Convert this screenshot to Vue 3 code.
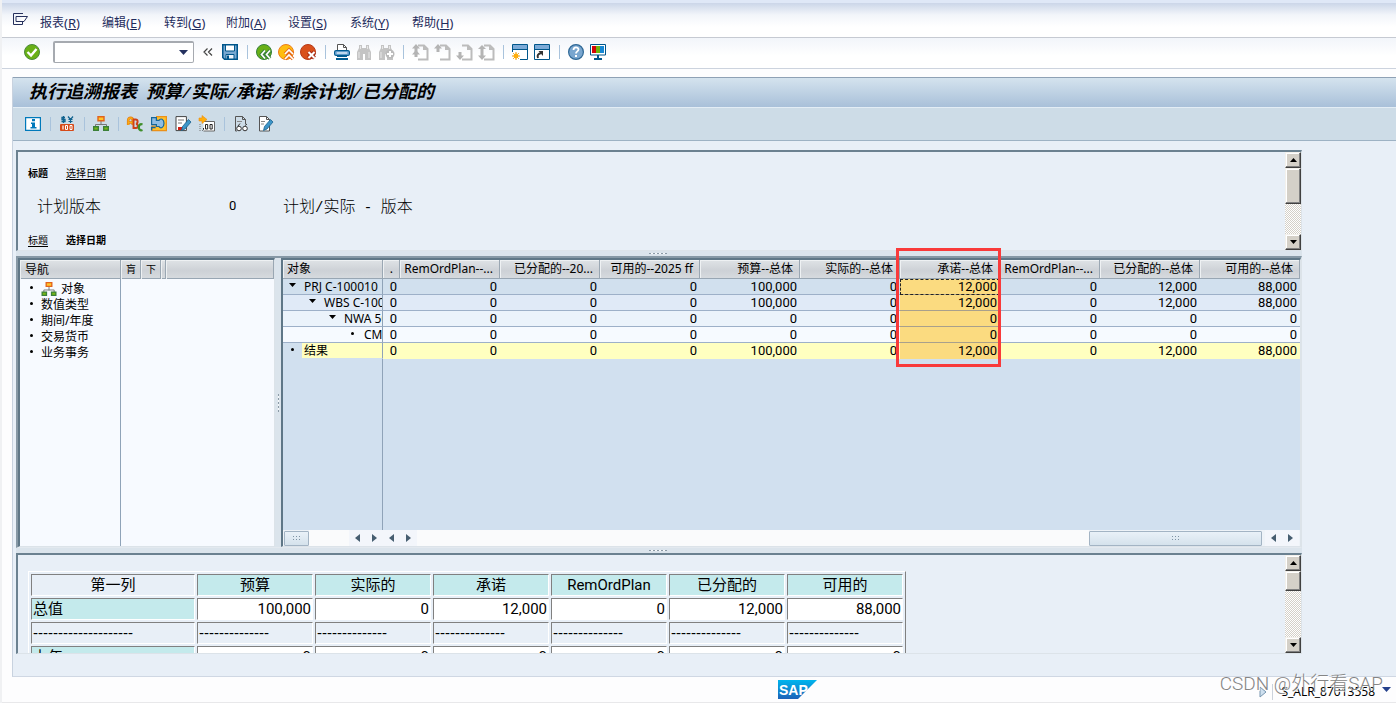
<script setup>
const menus = [
  ['报表', 'R'], ['编辑', 'E'], ['转到', 'G'], ['附加', 'A'],
  ['设置', 'S'], ['系统', 'Y'], ['帮助', 'H'],
]

const page = '<path d="M6 1.500h6l3.500 3.500v10.500H6" fill="none" stroke="#bcbcbc" stroke-width="2"/><path d="M11 1v5h5z" fill="#bcbcbc"/>'
const up = '<path d="M4 0l4 4.500H5.500V8h-3V4.500H0z" fill="#b4b4b4"/>'
const down = '<path d="M4 16l4-4.500H5.500V8h-3v3.500H0z" fill="#b4b4b4"/>'
const binoculars = '<path d="M3 1h3v3h4V1h3v3l2 4v8H9v-6H7v6H1V8l2-4z" fill="#c4c4c4"/><path d="M3 8v6M13 8v6M4.500 2v3M11.500 2v3" stroke="#e8e8e8"/>'
const pen = '<path d="M13.500 3.500l2.500 2.500-6 7-3.500 1.500 1-4z" fill="#3d95c8" stroke="#1b628e" stroke-width=".8"/>'

const icons = {
  ok: '<circle cx="8" cy="8" r="7.500" fill="#69b017" stroke="#4b8a3c"/><path d="M3.500 8l3.500 3.500L12.500 5" fill="none" stroke="#fff" stroke-width="2.400"/>',
  save: '<path d="M.75.75h14.500v14.500H2.500L.75 13.500z" fill="#79a9d1" stroke="#00568b" stroke-width="1.500"/><path d="M3.500 1h9v6h-9z" fill="#fff" stroke="#00568b"/><path d="M4 10.500h8V15H4z" fill="#eef4fa" stroke="#00568b"/><path d="M5 11.500h2V15H5z" fill="#00568b"/>',
  back: '<circle cx="8" cy="8" r="7.500" fill="#69b017" stroke="#35803c"/><path d="M9 6.500L5.500 10.500 9 14.500M14 6.500l-3.500 4 3.500 4" fill="none" stroke="#35803c" stroke-width="3.500"/><path d="M9 6.500L5.500 10.500 9 14.500M14 6.500l-3.500 4 3.500 4" fill="none" stroke="#fff" stroke-width="1.700"/>',
  exit: '<circle cx="8" cy="8" r="7.500" fill="#ffbd10" stroke="#ec7d1b"/><path d="M7 10l4-4 4 4M7 15l4-4 4 4" fill="none" stroke="#e76d19" stroke-width="3.500"/><path d="M7 10l4-4 4 4M7 15l4-4 4 4" fill="none" stroke="#fff" stroke-width="1.700"/>',
  cancel: '<circle cx="8" cy="8" r="7.500" fill="#d9501b" stroke="#b73a19"/><path d="M8.500 8l6 6m0-6l-6 6" stroke="#a72c15" stroke-width="4"/><path d="M8.500 8l6 6m0-6l-6 6" stroke="#fff" stroke-width="2"/>',
  print: '<path d="M3.500 6V.5h6l3 3V6" fill="#fff" stroke="#555"/><path d="M9.500.5v3h3" fill="none" stroke="#555"/><rect x=".6" y="6.600" width="14.800" height="4.800" rx="1.500" fill="#7fb0db" stroke="#005b91" stroke-width="1.200"/><path d="M3 9h10" stroke="#fff"/><path d="M3 12h10v1H3zM2 14h12v2H2z" fill="#005b91"/>',
  find: binoculars,
  findNext: binoculars + '<circle cx="12" cy="10" r="4.500" fill="#bbb"/><path d="M12 7v6M9 10h6" stroke="#fff" stroke-width="2"/>',
  first: page + up + '<path d="M4 6l4 4.500H5.500V13h-3v-2.500H0z" fill="#b4b4b4"/>',
  prev: page + up,
  next: page + down,
  last: page + '<path d="M4 1l4 4H5.500v3h-3V5H0z" fill="#b4b4b4"/>' + down,
  session: '<path d="M.5.5h15v15h-15z" fill="#fff" stroke="#00568b"/><path d="M1 1h14v4H1z" fill="#7caad7"/><path d="M1 5.500h14" stroke="#00568b"/><path d="M0 8h8v8H0z" fill="#fff"/><path d="M4 8v8M0 12h8M1.200 9.200l5.600 5.600M6.800 9.200l-5.600 5.600" stroke="#f09a00"/><circle cx="4" cy="12" r="2.400" fill="#ffad0a"/>',
  shortcut: '<path d="M.5.5h15v15h-15z" fill="#fff" stroke="#00568b"/><path d="M1 1h14v4H1z" fill="#7caad7"/><path d="M1 5.500h14" stroke="#00568b"/><path d="M4 14c-1-3 0-4 3-5" fill="none" stroke="#333" stroke-width="2"/><path d="M4.500 7H9v5z" fill="#333"/>',
  help: '<circle cx="8" cy="8" r="7.400" fill="#79a6cf" stroke="#2f6896" stroke-width="1.200"/><path d="M5.500 6c0-3.400 5-3.200 5-.5C10.500 7.500 8 7.300 8 9.500" fill="none" stroke="#fff" stroke-width="1.800"/><path d="M7 11h2v2H7z" fill="#fff"/>',
  monitor: '<path d="M.5.5h15v10.500H.5z" fill="#fff" stroke="#00568b"/><path d="M2 2h4v7H2z" fill="#d50505"/><path d="M6 2h4v7H6z" fill="#72b40c"/><path d="M10 2h4v7h-4z" fill="#1688d5"/><path d="M7 11h2v3h3v2H4v-2h3z" fill="#00568b"/>',
  info: '<path d="M.6 1.600h14.800v12.800H.6z" fill="#fff" stroke="#0079bb" stroke-width="1.200"/><path d="M7 3h3v2.200H7zM6 6.500h4V11h1.500v1.500H5.500V11H7V8H6z" fill="#0079bb"/>',
  currency: '<path d="M6 1.500H3v2h3v2H2.500M4.500 0v7" fill="none" stroke="#10628e" stroke-width="1.300"/><path d="M9 .5L11.500 3.500 14 .5M11.500 3.500V7M9.500 3.500h4M9.500 5.500h4" fill="none" stroke="#10628e" stroke-width="1.200"/><rect x="1" y="8" width="14" height="7" rx="1" fill="#d64a19"/><path d="M4 9.500v4" stroke="#fff" stroke-width="1.200"/><path d="M6.500 9.500h2v4h-2zM11 9.500h2v4h-2z" fill="none" stroke="#fff"/>',
  tree: '<path d="M8 5v4M2.500 11V8.500h11V11" fill="none" stroke="#777"/><path d="M5 .7h6v4H5z" fill="#ffc52a" stroke="#e2621b" stroke-width="1.400"/><path d="M.7 10.700h4.600v3.600H.7zM10.700 10.700h4.600v3.600h-4.600z" fill="#79b815" stroke="#3c8038" stroke-width="1.400"/>',
  abc: '<path d="M1.200 9V4.500c0-3.500 4.600-3.500 4.600 0V9M1.200 6.500h4.600" fill="none" stroke="#e27a18" stroke-width="2.600"/><path d="M1.200 9V4.500c0-3.500 4.600-3.500 4.600 0V9M1.200 6.500h4.600" fill="none" stroke="#fbb010" stroke-width="1.200"/><path d="M6.500 3.500v8.500H9c2.500 0 2.500-4 0-4.300 2.200-.4 2.200-4.200-.3-4.200z" fill="none" stroke="#cf4118" stroke-width="1.900"/><path d="M15.500 8.500c-5-2-5 7.500 0 5.500" fill="none" stroke="#3f8e2a" stroke-width="2.300"/>',
  flow: '<path d="M5 .6h10.400v14H1V10h4" fill="#ffc02a" stroke="#ec9118" stroke-width="1.200"/><path d="M.6 1.600h4.800v2.800H8c1.500-2.500 5-1.500 5 2.800s-3.500 6-5 3.300H5.400V8.600H.6z" fill="#8fbde2" stroke="#14669a" stroke-width="1.200"/><path d="M.6 14.500v-3h4" fill="none" stroke="#14669a" stroke-width="1.300"/>',
  edit: '<path d="M1 .6h10.400v14H1z" fill="#fff" stroke="#444"/><path d="M3 4h6M3 7h4" stroke="#777"/><path d="M3 11h5v3H3z" fill="#d21e12"/>' + pen,
  decimals: '<path d="M4.500 5.500h11v9.500h-11" fill="#fff" stroke="#666"/><path d="M4.500 12v1.500l-1 1M6.500 8.500h2.200v4.500H6.500zM11 8.500h2.200v4.500H11z" fill="none" stroke="#222"/><path d="M0 2h3V-.5l5 4-5 4V5H0z" fill="#ffae0a" stroke="#e88d18" stroke-width=".6"/><path d="M1 8v7" stroke="#777" stroke-dasharray="1 1"/>',
  display: '<path d="M2.500 15V.5h7l3 3V8M2.500 15H4" fill="none" stroke="#555"/><path d="M9.500.5v3h3" fill="none" stroke="#555"/><path d="M4 5.500h5" stroke="#888"/><circle cx="6" cy="12.500" r="2.300" fill="#fff" stroke="#333"/><circle cx="12" cy="12.500" r="2.300" fill="#fff" stroke="#333"/><path d="M5 10l2-2.500M12 9.500l2-1.500" stroke="#333"/>',
  change: '<path d="M2.500 15V.5h7l3 3V15z" fill="#fff" stroke="#555"/><path d="M9.500.5v3h3" fill="none" stroke="#555"/><path d="M4 5.500h4M4 8h3" stroke="#888"/>' + pen,
}

const sysbar = [
  ['save', '保存'], null, ['back', '返回'], ['exit', '退出'], ['cancel', '取消'], null,
  ['print', '打印'], ['find', '查找'], ['findNext', '继续查找'], null,
  ['first', '第一页'], ['prev', '上一页'], ['next', '下一页'], ['last', '最后一页'], null,
  ['session', '新建会话'], ['shortcut', '快捷方式'], null, ['help', '帮助'], ['monitor', '布局'],
]
const appbar = [
  ['info', '信息'], null, ['currency', '货币'], null, ['tree', '层次'], null,
  ['abc', '文本'], ['flow', '流程'], ['edit', '编辑'], ['decimals', '小数位'], null,
  ['display', '显示'], ['change', '更改'],
]

const title = ['执行追溯报表', ' ', '预算', '/', '实际', '/', '承诺', '/', '剩余计划', '/', '已分配的']
const nav = ['对象', '数值类型', '期间/年度', '交易货币', '业务事务']

const cols = [
  'RemOrdPlan--...', '已分配的--20...', '可用的--2025 ff', '预算--总体', '实际的--总体',
  '承诺--总体', 'RemOrdPlan--...', '已分配的--总体', '可用的--总体',
]
const full = ['0', '0', '0', '100,000', '0', '12,000', '0', '12,000', '88,000']
const zero = Array(9).fill('0')
const rows = [
  { label: 'PRJ C-100010', level: 0, open: true, values: full },
  { label: 'WBS C-1000', level: 1, open: true, values: full },
  { label: 'NWA 50', level: 2, open: true, values: zero },
  { label: 'CMIT', level: 3, open: false, values: zero },
  { label: '结果', level: 0, open: false, values: full },
]

const sumHead = ['第一列', '预算', '实际的', '承诺', 'RemOrdPlan', '已分配的', '可用的']
const dash = '-'.repeat(14)
const sumRows = [
  { kind: 'val', cells: ['总值', '100,000', '0', '12,000', '0', '12,000', '88,000'] },
  { kind: 'rule', cells: ['-'.repeat(20), dash, dash, dash, dash, dash, dash] },
  { kind: 'val', cells: ['上年', '0', '0', '0', '0', '0', '0'] },
]
</script>

<template>
  <div class="app">
    <nav class="menubar" aria-label="菜单">
      <button class="sysmenu" aria-label="系统菜单">
        <svg width="16" height="12" viewBox="0 0 16 12"><path d="M10 .5H.5v11h9V9M3 3.500h8M3 3.500v5h5" fill="none" stroke="#26305c" /><path d="M9 3.500h5.500L11 8.500H8" fill="#fff" stroke="#26305c" /></svg>
      </button>
      <button v-for="m in menus" :key="m[1]" class="menu">{{ m[0] }}<span class="key">(<u>{{ m[1] }}</u>)</span></button>
    </nav>

    <div class="sysbar">
      <button class="tool ok" aria-label="确认"><svg width="16" height="16" viewBox="0 0 16 16" v-html="icons.ok"></svg></button>
      <div class="command">
        <input type="text" aria-label="命令">
        <button aria-label="命令历史"><svg width="9" height="5"><path d="M0 0h9L4.500 5z" fill="#24315f" /></svg></button>
      </div>
      <button class="collapse" aria-label="收起"><svg width="10" height="8"><path d="M4.500.5L1 4l3.500 3.500M9 .5L5.500 4 9 7.500" fill="none" stroke="#444" stroke-width="1.200" /></svg></button>
      <template v-for="(t, i) in sysbar" :key="i">
        <button v-if="t" class="tool" :aria-label="t[1]"><svg width="16" height="16" viewBox="0 0 16 16" v-html="icons[t[0]]"></svg></button>
        <span v-else class="sep"></span>
      </template>
    </div>

    <main class="work">
      <h1><span v-for="(s, i) in title" :key="i" :class="{ half: s.length === 1 }">{{ s }}</span></h1>
      <div class="appbar">
        <template v-for="(t, i) in appbar" :key="i">
          <button v-if="t" class="tool" :aria-label="t[1]"><svg width="16" height="16" viewBox="0 0 16 16" v-html="icons[t[0]]"></svg></button>
          <span v-else class="sep"></span>
        </template>
      </div>

      <div class="report">
        <section class="pane head">
          <div class="pane-body">
            <div class="links"><b>标题</b><a href="#">选择日期</a></div>
            <div class="version">
              <span>计划版本</span><span class="num">0</span>
              <span>计划<i>/</i>实际<i>&nbsp;-&nbsp;</i>版本</span>
            </div>
            <div class="links"><a href="#">标题</a><b>选择日期</b></div>
          </div>
          <div class="vscroll">
            <button aria-label="向上"><svg width="7" height="4"><path d="M0 4h7L3.500 0z" /></svg></button>
            <span class="thumb tall"></span><span class="track"></span>
            <button aria-label="向下"><svg width="7" height="4"><path d="M0 0h7L3.500 4z" /></svg></button>
          </div>
        </section>

        <div class="split"><span></span></div>

        <section class="middle">
          <div class="nav">
            <div class="navhead"><span>导航</span><span><em>肓</em></span><span><em>下</em></span><span></span><span></span></div>
            <div class="navbody">
              <ul>
                <li v-for="(n, i) in nav" :key="n"><svg v-if="i === 0" width="16" height="15" viewBox="0 0 16 16" v-html="icons.tree"></svg>{{ n }}</li>
              </ul>
            </div>
          </div>
          <div class="vsplit"><span></span></div>
          <div class="data">
            <table class="grid">
              <colgroup><col class="c-tree"><col class="c-dot"><col v-for="(c, i) in cols" :key="i"></colgroup>
              <thead>
                <tr>
                  <th class="first">对象</th>
                  <th>.</th>
                  <th v-for="(c, i) in cols" :key="i">{{ c }}<span v-if="i === 5" class="mark"></span></th>
                </tr>
              </thead>
              <tbody>
                <tr v-for="(r, ri) in rows" :key="ri" :class="'r' + ri">
                  <td class="tree">
                    <div :class="'lv' + r.level">
                      <span class="knob"><svg v-if="r.open" width="7" height="4"><path d="M0 0h7L3.500 4z" /></svg><svg v-else width="3" height="3"><circle cx="1.500" cy="1.500" r="1.500" /></svg></span>
                      <span class="name">{{ r.label }}</span>
                    </div>
                  </td>
                  <td>0</td>
                  <td v-for="(v, i) in r.values" :key="i" :class="{ hot: i === 5 }">{{ v }}</td>
                </tr>
              </tbody>
            </table>
            <div class="blank"></div>
            <div class="hscroll">
              <div class="hs-left">
                <span class="hthumb small"><i></i></span><span class="fill"></span>
                <button aria-label="左"><svg width="5" height="8"><path d="M5 0v8L0 4z" /></svg></button>
                <button aria-label="右"><svg width="5" height="8"><path d="M0 0v8l5-4z" /></svg></button>
              </div>
              <button aria-label="左"><svg width="5" height="8"><path d="M5 0v8L0 4z" /></svg></button>
              <button aria-label="右"><svg width="5" height="8"><path d="M0 0v8l5-4z" /></svg></button>
              <span class="fill"></span>
              <span class="hthumb"><i></i></span>
              <button class="end" aria-label="左"><svg width="5" height="8"><path d="M5 0v8L0 4z" /></svg></button>
              <button aria-label="右"><svg width="5" height="8"><path d="M0 0v8l5-4z" /></svg></button>
            </div>
          </div>
        </section>

        <div class="split"><span></span></div>

        <section class="pane foot">
          <div class="pane-body">
            <table class="sum">
              <thead><tr><th v-for="h in sumHead" :key="h">{{ h }}</th></tr></thead>
              <tbody>
                <tr v-for="(r, i) in sumRows" :key="i" :class="r.kind"><td v-for="(c, j) in r.cells" :key="j">{{ c }}</td></tr>
              </tbody>
            </table>
          </div>
          <div class="vscroll">
            <button aria-label="向上"><svg width="7" height="4"><path d="M0 4h7L3.500 0z" /></svg></button>
            <span class="thumb"></span><span class="track"></span>
            <button aria-label="向下"><svg width="7" height="4"><path d="M0 0h7L3.500 4z" /></svg></button>
          </div>
        </section>
      </div>
    </main>

    <footer class="status">
      <svg class="logo" width="39" height="19" viewBox="0 0 39 19">
        <defs><linearGradient id="sap" x2="0" y2="1"><stop offset="0" stop-color="#00b5ee" /><stop offset="1" stop-color="#1b62b8" /></linearGradient></defs>
        <path d="M0 0h39L20 19H0z" fill="url(#sap)" />
        <text x="1" y="15" font-family="Liberation Sans, sans-serif" font-weight="bold" font-size="14" fill="#fff">SAP</text>
      </svg>
      <div class="tcode">
        <svg width="8" height="12"><path d="M1 1v10l6-5z" fill="#cfe0ef" stroke="#7695b0" /></svg>
        <span class="code">S_ALR_87013558</span>
        <button aria-label="状态信息"><svg width="9" height="5"><path d="M0 0h9L4.500 5z" fill="#24408c" /></svg></button>
      </div>
      <span class="watermark">CSDN @外行看SAP</span>
    </footer>
  </div>
</template>

<style>
body { margin: 0; overflow: hidden; }
</style>

<style scoped>
.app {
  height: 100vh;
  display: flex;
  flex-direction: column;
  box-sizing: border-box;
  border-left: 2px solid #f0f1f3;
  background: #fdfdfe;
  font: 12px/16px "Noto Sans", "Noto Sans CJK SC", sans-serif;
  color: #000;
}
svg { display: block; flex: none; overflow: visible; }
button { border: 0; padding: 0; margin: 0; background: none; font: inherit; color: inherit; display: flex; align-items: center; justify-content: center; }

.menubar {
  display: flex;
  align-items: center;
  height: 34px;
  padding-left: 11px;
  border-top: 3px solid #dfe8f7;
  border-bottom: 1px solid #c6cad2;
  background: linear-gradient(#cbd6e8, #f2f5fa 35%, #fff 70%);
  color: #1f2c5c;
}
.sysmenu { width: 27px; justify-content: flex-start; padding-bottom: 2px; }
.menu { width: 62px; justify-content: flex-start; padding-top: 6px; flex: none; white-space: nowrap; }
.key { font-size: 13px; }

.sysbar {
  display: flex;
  align-items: center;
  height: 28px;
  padding: 0 0 2px 19px;
  border-bottom: 1px solid #ccd3de;
  background: linear-gradient(#f2f5fa, #fff 60%);
}
.sysbar .tool { width: 22px; height: 22px; flex: none; }
.sysbar .sep { width: 12px; }
.sep { display: flex; justify-content: center; height: 14px; flex: none; }
.sep::before { content: ""; width: 1px; background: #a9c3dc; }
.command {
  display: flex;
  width: 138px;
  height: 19px;
  margin-left: 10px;
  border: 2px solid #a6aab0;
  border-right-width: 1px;
  border-bottom-width: 1px;
  border-radius: 2px;
  background: #fff;
}
.command input { flex: 1; min-width: 0; border: 0; outline: 0; background: none; padding: 0 4px; font: inherit; }
.command button { width: 20px; }
.collapse { width: 25px; height: 22px; padding-left: 4px; flex: none; }
.collapse svg { margin-right: 2px; }

.work {
  flex: 1;
  min-height: 0;
  display: flex;
  flex-direction: column;
  margin: 8px 0 0 10px;
  border-left: 1px solid #c8d2df;
  border-bottom: 1px solid #cfd7e3;
  background: #e8eff7;
}
h1 {
  margin: 0;
  height: 29px;
  padding-left: 16px;
  border-top: 1px solid #8fa1b5;
  border-bottom: 1px solid #e3edf5;
  background: linear-gradient(#d4e3ee, #a9c0d9);
  font: italic bold 18px/25px "Noto Sans CJK SC", sans-serif;
  white-space: pre;
}
h1 .half { font: italic bold 15px/25px "Liberation Mono", monospace; }
.appbar {
  display: flex;
  align-items: center;
  height: 32px;
  padding-left: 8px;
  border-bottom: 1px solid #9db2c4;
  background: #cddce7;
}
.appbar .tool { width: 24px; height: 24px; flex: none; }
.appbar .sep { width: 10px; }

.report {
  flex: 1;
  min-height: 0;
  display: flex;
  flex-direction: column;
  margin: 9px 94px 22px 3px;
}
.pane {
  display: flex;
  border: 2px solid #6b8190;
  border-right: 1px solid #dce3e9;
  border-bottom: 1px solid #dce3e9;
  overflow: hidden;
}
.pane-body { flex: 1; min-width: 0; overflow: hidden; }
.head, .foot { flex: 0 0 98px; }
.links { display: flex; gap: 18px; padding-left: 10px; font-size: 10px; line-height: 14px; }
.head .links:first-child { margin-top: 14px; }
.links a { color: #000; text-underline-offset: 2px; }
.version {
  display: grid;
  grid-template-columns: 192px 54px 1fr;
  padding-left: 19px;
  margin: 14px 0;
  font: 16px/22px "Noto Sans CJK SC", sans-serif;
  font-weight: 300;
}
.version .num { font: 13px/24px "Roboto", sans-serif; }
.version i { font: 14px/22px "Liberation Mono", monospace; }

.vscroll {
  width: 16px;
  display: flex;
  flex-direction: column;
  background: repeating-conic-gradient(#d4d0c8 0 25%, #fff 0 50%) 0 0 / 2px 2px;
}
.vscroll button, .thumb {
  box-sizing: border-box;
  height: 16px;
  flex: none;
  background: #d4d0c8;
  border: 1px solid;
  border-color: #f3f1ec #404040 #404040 #f3f1ec;
  box-shadow: inset -1px -1px #808080, inset 1px 1px #fff;
}
.thumb { height: 20px; }
.thumb.tall { height: 36px; }
.track { flex: 1; }

.split { flex: 0 0 5px; background: #dbe4ec; display: flex; align-items: center; justify-content: center; }
.split span { width: 18px; height: 1px; margin-right: 2px; background: repeating-linear-gradient(90deg, #8b9aa6 0 2px, #f6f8fa 2px 4px); }

.middle {
  flex: 1;
  min-height: 0;
  display: flex;
  border: 2px solid #8698a5;
  border-right: 1px solid #dce3e9;
  border-bottom: 1px solid #e3e9ef;
}
.nav {
  flex: 0 0 254px;
  display: flex;
  flex-direction: column;
  border: 2px solid #5f7787;
  border-right: 1px solid #dce3e9;
  border-bottom: 1px solid #dce3e9;
  background: #f7faff;
}
.navhead, .grid th { background: linear-gradient(#dfe3e6, #cdd1d6 60%, #d6dade); }
.navhead { display: grid; grid-template-columns: 101px 20px 20px 5px 1fr; height: 18px; border-bottom: 1px solid #98a6b3; line-height: 19px; }
.navhead span { border-right: 1px solid #9aa7b3; box-shadow: inset 1px 1px #eef1f3; padding-left: 5px; }
.navhead span:nth-child(4) { padding: 0; }
.navhead em { font-style: normal; display: block; font-size: 10px; }
.navbody { flex: 1; display: flex; }
.nav ul { box-sizing: border-box; width: 101px; margin: 0; padding: 2px 0 0; list-style: none; border-right: 1px solid #8fa3b8; }
.nav li { display: flex; align-items: center; gap: 4px; height: 16px; white-space: nowrap; }
.nav li::before { content: ""; width: 3px; height: 3px; margin: 0 4px 3px 10px; border-radius: 50%; background: #000; }
.vsplit { flex: 0 0 6px; background: #dbe4ec; display: flex; align-items: center; justify-content: center; }
.vsplit span { width: 1px; height: 18px; background: repeating-linear-gradient(#8b9aa6 0 2px, #f6f8fa 2px 4px); }

.data {
  flex: 1;
  min-width: 0;
  display: flex;
  flex-direction: column;
  border: 2px solid #5f7787;
  border-right: 1px solid #dce3e9;
  border-bottom: 1px solid #dce3e9;
  background: #d1e0ef;
}
.grid { width: 100%; table-layout: fixed; border-collapse: separate; border-spacing: 0; }
.c-tree { width: 100px; }
.c-dot { width: 17px; }
.grid th {
  position: relative;
  height: 18px;
  padding: 0 6px 0 0;
  border-right: 1px solid #9aa7b3;
  border-bottom: 1px solid #98a6b3;
  box-shadow: inset 1px 1px #eef1f3;
  font-weight: normal;
  line-height: 18px;
  text-align: right;
  white-space: nowrap;
}
.grid th.first { text-align: left; padding-left: 4px; }
.grid td {
  height: 15px;
  padding: 0 3px 0 0;
  border-bottom: 1px solid #9db0c8;
  font: 13px/15px "Roboto", sans-serif;
  text-align: right;
}
.grid td.tree { padding: 0; border-right: 1px solid #8fa3b8; font: 12px/15px "Noto Sans", "Noto Sans CJK SC", sans-serif; text-align: left; }
.tree div { display: flex; height: 15px; overflow: hidden; white-space: nowrap; }
.lv1 { padding-left: 20px; }
.lv2 { padding-left: 40px; }
.lv3 { padding-left: 60px; }
.knob { width: 19px; flex: none; display: flex; align-items: center; justify-content: center; padding-bottom: 3px; }
.name { flex: 1; padding-left: 2px; overflow: hidden; }
.r0 td { background: #d1e0ee; }
.r1 td { background: #e0eaf7; }
.r2 td { background: #ebf3fb; }
.r3 td { background: #f6faff; }
.grid .r4 td { background: #ffffc0; border-bottom-color: #ffffc0; }
.grid .r4 .tree { background: #d1e0ee; border-bottom-color: #d1e0ee; }
.r4 .name { background: #ffffc0; }
.grid td.hot, .grid .r4 td.hot { background: #fbdb80; border-bottom-color: #a9a08c; }
.grid .r4 td.hot { border-bottom-color: #fbdb80; }
.grid .r0 td.hot { outline: 1px dashed #222; outline-offset: -1px; }
.mark { position: absolute; z-index: 1; top: -12px; left: -4px; right: -2px; height: 113px; border: 3px solid #f93a3a; }
.blank { flex: 1; box-sizing: border-box; width: 100px; border-right: 1px solid #8fa3b8; }
.hscroll { display: flex; align-items: center; height: 16px; padding-right: 1px; background: #eef3f8; }
.hs-left { display: flex; align-items: center; width: 100px; height: 16px; }
.hscroll button { width: 17px; height: 16px; background: #f3f6fb; }
.hscroll button path { fill: #465e70; }
.hscroll .end { margin-left: 3px; }
.fill { flex: 1; height: 16px; background: #fafbfc; }
.hthumb { display: flex; align-items: center; justify-content: center; width: 171px; height: 13px; border: 1px solid #a3b4c4; border-radius: 1px; background: linear-gradient(#e9f1f8, #d5e2ec); }
.hthumb.small { width: 23px; margin-left: 1px; }
.hthumb i { width: 9px; height: 6px; background: radial-gradient(circle, #7f93a4 1px, transparent 1px) 0 0 / 3px 3px; }

.sum {
  width: 878px;
  margin: 16px 0 0 10px;
  table-layout: fixed;
  border: 1px solid;
  border-color: #fff #808080 #808080 #fff;
  border-collapse: separate;
  border-spacing: 2px;
  font: 15px/18px "Roboto", "Noto Sans CJK SC", sans-serif;
}
.sum th, .sum td {
  box-sizing: border-box;
  height: 22px;
  padding: 0 1px;
  border: 1px solid;
  border-color: #808080 #fff #fff #808080;
  background: #c4eaec;
  font-weight: normal;
  text-align: right;
  white-space: nowrap;
}
.sum th { width: 116px; text-align: center; }
.sum th:first-child { width: 164px; background: #e8eff7; }
.val td { background: #fff; }
.val td:first-child { background: #c4eaec; }
.sum td:first-child, .sum .rule td { text-align: left; }
.sum .rule td { background: #e8eff7; font-family: "Liberation Sans", sans-serif; }

.status { position: relative; display: flex; align-items: center; flex: 0 0 26px; padding-left: 776px; border-bottom: 1px solid #e8e8ea; box-sizing: border-box; }
.tcode { margin-left: auto; display: flex; align-items: center; padding: 5px 5px 0 0; }
.code { margin-left: 5px; padding: 0 6px 0 8px; border-left: 1px solid #ccd3dc; font-size: 12px; }
.tcode button { width: 10px; padding-bottom: 5px; }
.watermark {
  position: absolute;
  right: 13px;
  bottom: 6px;
  font: 19px/24px "Roboto", "Noto Sans CJK SC", sans-serif;
  font-weight: 300;
  color: #858585;
  text-shadow: 1px 1px #fff;
}
</style>
